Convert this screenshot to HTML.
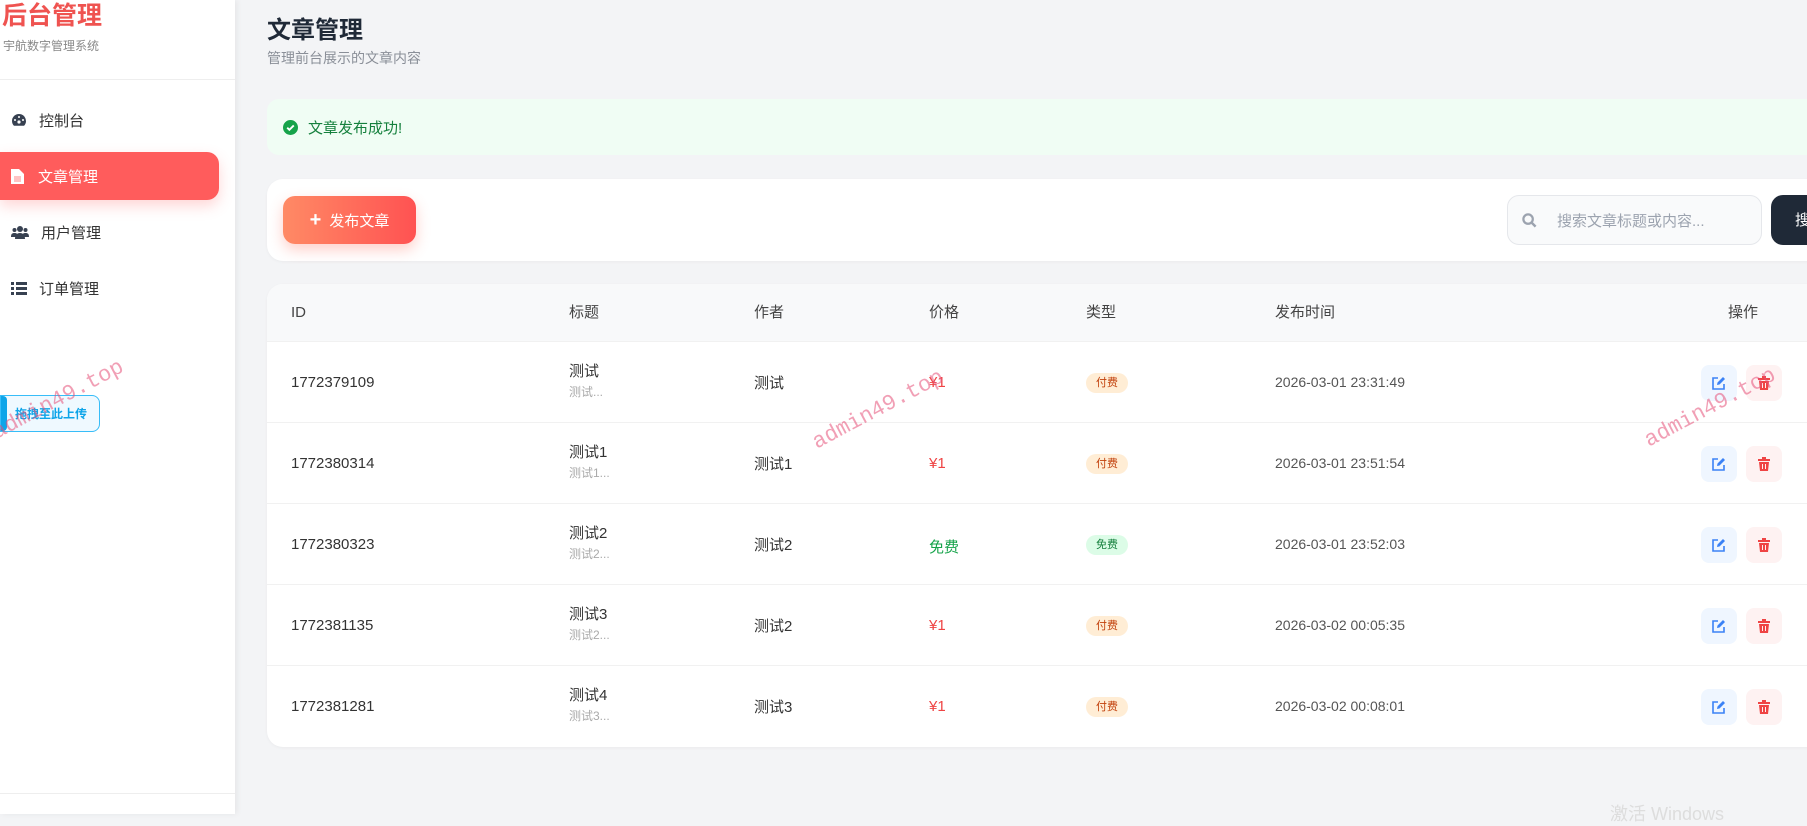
<!DOCTYPE html>
<html><head><meta charset="utf-8"><style>
*{box-sizing:border-box;margin:0;padding:0}
body{width:1807px;height:814px;overflow:hidden;background:#f3f4f6;font-family:"Liberation Sans","Noto Sans CJK SC",sans-serif;position:relative;color:#1f2937}
.side{position:absolute;left:0;top:0;width:235px;height:814px;background:#fff;box-shadow:2px 0 6px rgba(0,0,0,.06)}
.logo{position:absolute;left:2px;top:0;font-size:25px;font-weight:bold;color:#ef5350;line-height:32px}
.sub{position:absolute;left:3px;top:37px;font-size:12px;color:#888}
.hr{position:absolute;left:0;width:235px;height:1px;background:#eee}
.nav{position:absolute;left:0;width:219px;height:48px;display:flex;align-items:center;font-size:15px;color:#333}
.nav svg{margin-left:11px;margin-right:12px}
.nav.act{background:#ff5c5c;color:#fff;border-radius:0 12px 12px 0;box-shadow:0 6px 14px rgba(255,92,92,.25)}
.up{position:absolute;left:0;top:395px;width:100px;height:37px;border:1px solid #38bdf8;border-radius:0 8px 8px 0;background:#eff9ff;color:#0ea5e9;font-size:12px;font-weight:bold;display:flex;align-items:center;padding-left:14px}
.up:before{content:"";position:absolute;left:0;top:0;width:6px;height:35px;background:#0ea5e9;border-radius:0 4px 4px 0}
.title{position:absolute;left:267px;top:10px;font-size:24px;font-weight:bold;color:#1f2937}
.msub{position:absolute;left:267px;top:48px;font-size:14px;color:#8a8f98}
.alert{position:absolute;left:267px;top:99px;width:1560px;height:56px;background:#f0fdf4;border-radius:12px;display:flex;align-items:center;padding-left:16px;color:#15803d;font-size:15px}
.card{position:absolute;left:267px;background:#fff;border-radius:16px;width:1560px;box-shadow:0 1px 3px rgba(0,0,0,.04)}
.btn{position:absolute;left:16px;top:17px;width:133px;height:48px;border-radius:12px;background:linear-gradient(90deg,#ff8a65,#ff5252);color:#fff;font-size:15px;display:flex;align-items:center;justify-content:center;box-shadow:0 6px 14px rgba(255,100,80,.3)}
.search{position:absolute;left:1240px;top:16px;width:255px;height:50px;border:1px solid #e5e7eb;background:#f9fafb;border-radius:12px;display:flex;align-items:center;padding-left:14px;font-size:15px;color:#9ca3af}
.sbtn{position:absolute;left:1504px;top:16px;width:80px;height:50px;background:#1f2937;border-radius:12px;color:#fff;font-size:15px;padding:14px 0 0 24px}
.th{position:absolute;top:0;height:57px;line-height:57px;font-size:15px;color:#444}
.row{position:absolute;left:0;width:1560px;height:81px;border-top:1px solid #f1f1f1}
.c{position:absolute;font-size:15px;color:#333}
.tag{position:absolute;left:819px;top:31px;width:42px;height:20px;border-radius:10px;font-size:11px;text-align:center;line-height:20px}
.paid{background:#ffedd5;color:#c2410c}.free{background:#dcfce7;color:#15803d}
.ab{position:absolute;top:23px;width:36px;height:36px;border-radius:8px;display:flex;align-items:center;justify-content:center}
.wm{position:absolute;font-family:"Liberation Mono",monospace;font-size:22px;color:rgba(230,80,120,.55);transform:rotate(-28deg);transform-origin:left bottom;white-space:nowrap}
</style></head><body>
<div class="side">
<div class="logo">后台管理</div>
<div class="sub">宇航数字管理系统</div>
<div class="hr" style="top:79px"></div>
<div class="nav" style="top:96px"><svg width="16" height="14" viewBox="0 0 16 14"><path d="M8 1a7 7 0 0 0-7 7c0 2 .8 3.6 2 4.8h10A7 7 0 0 0 8 1z" fill="#374151"/><circle cx="8" cy="9" r="1.6" fill="#fff"/><circle cx="4" cy="7" r="1" fill="#fff"/><circle cx="12" cy="7" r="1" fill="#fff"/><circle cx="8" cy="4" r="1" fill="#fff"/></svg>控制台</div>
<div class="nav act" style="top:152px"><svg width="13" height="16" viewBox="0 0 13 16" style="margin-right:14px"><path d="M0 1h8l5 5v10H0z" fill="#fff"/><path d="M3 9h7M3 11h7M3 13h7" stroke="#ff8a8a"/></svg>文章管理</div>
<div class="nav" style="top:208px"><svg width="18" height="14" viewBox="0 0 18 14"><circle cx="9" cy="4" r="3" fill="#374151"/><circle cx="3.5" cy="5" r="2" fill="#374151"/><circle cx="14.5" cy="5" r="2" fill="#374151"/><path d="M4 14c0-4 2-6 5-6s5 2 5 6z M0 12c0-3 1-4 3.5-4S7 9 7 12z M11 12c0-3 1-4 3.5-4s3.5 1 3.5 4z" fill="#374151"/></svg>用户管理</div>
<div class="nav" style="top:264px"><svg width="16" height="13" viewBox="0 0 16 13"><path d="M0 0h3v3H0zM5 0h11v3H5zM0 5h3v3H0zM5 5h11v3H5zM0 10h3v3H0zM5 10h11v3H5z" fill="#374151"/></svg>订单管理</div>
<div class="up">拖拽至此上传</div>
<div class="hr" style="top:793px"></div>
</div>
<div class="title">文章管理</div>
<div class="msub">管理前台展示的文章内容</div>
<div class="alert"><svg width="15" height="15" viewBox="0 0 16 16" style="margin-right:10px"><circle cx="8" cy="8" r="8" fill="#16a34a"/><path d="M4.5 8.2l2.3 2.3 4.7-4.7" stroke="#fff" stroke-width="2" fill="none"/></svg>文章发布成功!</div>
<div class="card" style="top:179px;height:82px">
<div class="btn"><b style="font-size:20px;margin-right:8px">+</b>发布文章</div>
<div class="search"><svg width="15" height="15" viewBox="0 0 16 16" style="margin-right:20px"><circle cx="6.5" cy="6.5" r="5" stroke="#9ca3af" stroke-width="2.4" fill="none"/><path d="M10 10l4.5 4.5" stroke="#9ca3af" stroke-width="2.6"/></svg>搜索文章标题或内容...</div>
<div class="sbtn">搜索</div>
</div>
<div class="card" style="top:284px;height:463px;overflow:hidden">
<div style="position:absolute;left:0;top:0;width:1560px;height:57px;background:#f8f9fa"></div>
<div class="th" style="left:24px">ID</div><div class="th" style="left:302px">标题</div><div class="th" style="left:487px">作者</div><div class="th" style="left:662px">价格</div><div class="th" style="left:819px">类型</div><div class="th" style="left:1008px">发布时间</div><div class="th" style="left:1461px">操作</div>
<div id="rows"></div>
</div>
<script>
var d=[["1772379109","测试","测试...","测试","¥1",1,"2026-03-01 23:31:49"],["1772380314","测试1","测试1...","测试1","¥1",1,"2026-03-01 23:51:54"],["1772380323","测试2","测试2...","测试2","免费",0,"2026-03-01 23:52:03"],["1772381135","测试3","测试2...","测试2","¥1",1,"2026-03-02 00:05:35"],["1772381281","测试4","测试3...","测试3","¥1",1,"2026-03-02 00:08:01"]];
var h="";d.forEach(function(r,i){h+='<div class="row" style="top:'+(57+i*81)+'px"><div class="c" style="left:24px;top:32px">'+r[0]+'</div><div class="c" style="left:302px;top:18px">'+r[1]+'</div><div class="c" style="left:302px;top:41px;font-size:12px;color:#aaa">'+r[2]+'</div><div class="c" style="left:487px;top:30px">'+r[3]+'</div><div class="c" style="left:662px;top:32px;color:'+(r[5]?'#ef4444':'#16a34a')+'">'+r[4]+'</div><div class="tag '+(r[5]?'paid':'free')+'">'+(r[5]?'付费':'免费')+'</div><div class="c" style="left:1008px;top:32px;font-size:14px;color:#555">'+r[6]+'</div><div class="ab" style="left:1434px;background:#eff6ff"><svg width="14" height="14" viewBox="0 0 14 14"><path d="M6 2H1v11h11V8" stroke="#3b82f6" stroke-width="1.6" fill="none"/><path d="M5 9l.5-2.5L11 1l2 2-5.5 5.5z" fill="#3b82f6"/></svg></div><div class="ab" style="left:1479px;background:#fef2f2"><svg width="12" height="14" viewBox="0 0 12 14"><path d="M0 2h12v2H0zM4 0h4v2H4zM1 5h10l-1 9H2z" fill="#ef4444"/><path d="M4.5 7v5M7.5 7v5" stroke="#fef2f2"/></svg></div></div>'});
document.getElementById("rows").innerHTML=h;
</script>
<div class="wm" style="left:0;top:420px">admin49.top</div>
<div class="wm" style="left:820px;top:430px">admin49.top</div>
<div class="wm" style="left:1652px;top:428px">admin49.top</div>
<div style="position:absolute;left:1610px;top:800px;font-size:18px;color:#ddd">激活 Windows</div>
</body></html>
